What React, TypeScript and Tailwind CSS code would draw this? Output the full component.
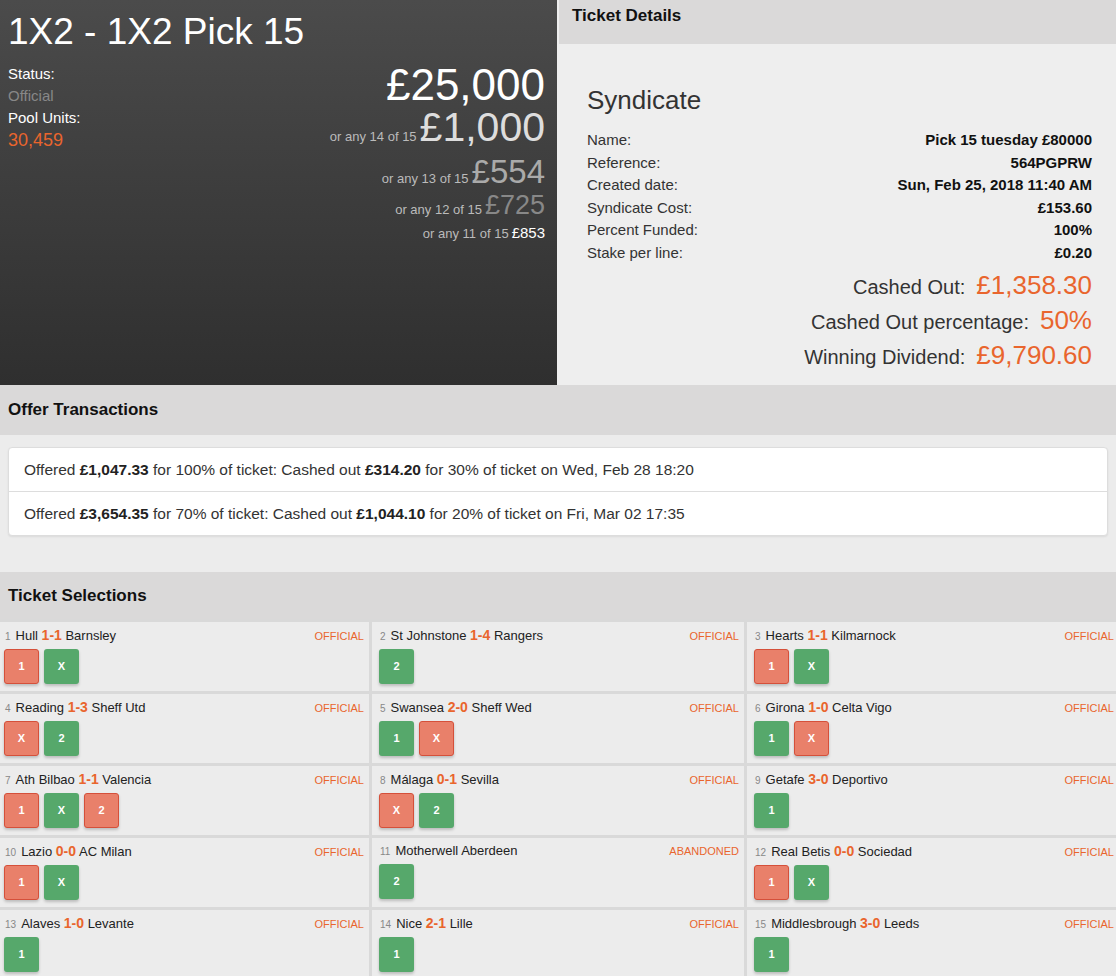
import React from "react";

type Pick = { label: string; win: boolean };
type Match = {
  n: number;
  home: string;
  away: string;
  score?: string;
  status: string;
  picks: Pick[];
};

const g = (label: string): Pick => ({ label, win: true });
const r = (label: string): Pick => ({ label, win: false });

const matches: Match[] = [
  { n: 1, home: "Hull", score: "1-1", away: "Barnsley", status: "OFFICIAL", picks: [r("1"), g("X")] },
  { n: 2, home: "St Johnstone", score: "1-4", away: "Rangers", status: "OFFICIAL", picks: [g("2")] },
  { n: 3, home: "Hearts", score: "1-1", away: "Kilmarnock", status: "OFFICIAL", picks: [r("1"), g("X")] },
  { n: 4, home: "Reading", score: "1-3", away: "Sheff Utd", status: "OFFICIAL", picks: [r("X"), g("2")] },
  { n: 5, home: "Swansea", score: "2-0", away: "Sheff Wed", status: "OFFICIAL", picks: [g("1"), r("X")] },
  { n: 6, home: "Girona", score: "1-0", away: "Celta Vigo", status: "OFFICIAL", picks: [g("1"), r("X")] },
  { n: 7, home: "Ath Bilbao", score: "1-1", away: "Valencia", status: "OFFICIAL", picks: [r("1"), g("X"), r("2")] },
  { n: 8, home: "Málaga", score: "0-1", away: "Sevilla", status: "OFFICIAL", picks: [r("X"), g("2")] },
  { n: 9, home: "Getafe", score: "3-0", away: "Deportivo", status: "OFFICIAL", picks: [g("1")] },
  { n: 10, home: "Lazio", score: "0-0", away: "AC Milan", status: "OFFICIAL", picks: [r("1"), g("X")] },
  { n: 11, home: "Motherwell", away: "Aberdeen", status: "ABANDONED", picks: [g("2")] },
  { n: 12, home: "Real Betis", score: "0-0", away: "Sociedad", status: "OFFICIAL", picks: [r("1"), g("X")] },
  { n: 13, home: "Alaves", score: "1-0", away: "Levante", status: "OFFICIAL", picks: [g("1")] },
  { n: 14, home: "Nice", score: "2-1", away: "Lille", status: "OFFICIAL", picks: [g("1")] },
  { n: 15, home: "Middlesbrough", score: "3-0", away: "Leeds", status: "OFFICIAL", picks: [g("1")] },
];

const details: [string, string][] = [
  ["Name:", "Pick 15 tuesday £80000"],
  ["Reference:", "564PGPRW"],
  ["Created date:", "Sun, Feb 25, 2018 11:40 AM"],
  ["Syndicate Cost:", "£153.60"],
  ["Percent Funded:", "100%"],
  ["Stake per line:", "£0.20"],
];

function SelectionCell({ m }: { m: Match }) {
  return (
    <div className="bg-[#ececec] h-[69px] pl-[7px] pr-[5px] pt-[4px]">
      <div className="flex items-baseline justify-between leading-[18px]">
        <div className="text-[13px] text-[#222]">
          <span className="text-[10px] text-[#888] ml-[1px] mr-[5px]">{m.n}</span>
          {m.home}{" "}
          {m.score && (
            <>
              <span className="text-[14px] font-bold text-[#e9652d]">{m.score}</span>{" "}
            </>
          )}
          {m.away}
        </div>
        <div className="text-[11px] text-[#e9652d]">{m.status}</div>
      </div>
      <div className="flex gap-[5px] mt-[3px]">
        {m.picks.map((p, i) => (
          <div
            key={i}
            className={
              p.win
                ? "w-[35px] h-[35px] rounded-[3px] bg-[#56a86b] text-white text-[11px] font-bold flex items-center justify-center shadow-[0_2px_3px_rgba(0,0,0,0.2)]"
                : "w-[35px] h-[35px] rounded-[3px] bg-[#e9806a] border border-[#d5503a] text-white text-[11px] font-bold flex items-center justify-center shadow-[0_2px_3px_rgba(0,0,0,0.2)]"
            }
          >
            {p.label}
          </div>
        ))}
      </div>
    </div>
  );
}

export default function App() {
  return (
    <div className="w-[1116px] h-[976px] overflow-hidden bg-[#ececec] font-['Liberation_Sans',Arial,sans-serif]">
      {/* top: pool summary + ticket details */}
      <div className="flex h-[385px]">
        <div className="w-[557px] bg-linear-to-b from-[#4b4b4b] to-[#2f2f2f] px-[8px] pr-[12px] pt-[12px]">
          <h1 className="text-[37px] leading-[40px] text-white">1X2 - 1X2 Pick 15</h1>
          <div className="flex justify-between mt-[11px]">
            <div className="text-[15px] leading-[22px]">
              <div className="text-white">Status:</div>
              <div className="text-[#888]">Official</div>
              <div className="text-white">Pool Units:</div>
              <div className="text-[18px] text-[#e9652d]">30,459</div>
            </div>
            <div className="flex flex-col items-end">
              <div className="text-[44px] leading-[44px] text-white">£25,000</div>
              <div className="flex items-baseline">
                <span className="text-[13px] leading-none text-[#bbb] mr-[3px]">or any 14 of 15</span>
                <span className="text-[41px] leading-[40px] text-[#dddddd]">£1,000</span>
              </div>
              <div className="flex items-baseline mt-[8px]">
                <span className="text-[13px] leading-none text-[#bbb] mr-[3px]">or any 13 of 15</span>
                <span className="text-[33px] leading-none text-[#aaaaaa]">£554</span>
              </div>
              <div className="flex items-baseline mt-[4px]">
                <span className="text-[13px] leading-none text-[#bbb] mr-[3px]">or any 12 of 15</span>
                <span className="text-[27px] leading-none text-[#888888]">£725</span>
              </div>
              <div className="flex items-baseline mt-[6px]">
                <span className="text-[13px] leading-none text-[#bbb] mr-[3px]">or any 11 of 15</span>
                <span className="text-[15px] leading-none text-white">£853</span>
              </div>
            </div>
          </div>
        </div>

        <div className="flex-1 bg-[#eeeeee]">
          <div className="ml-[2px] h-[44px] bg-[#dad9d9] pl-[13px] pt-[6px]">
            <h2 className="text-[17px] leading-[20px] font-bold text-[#111]">Ticket Details</h2>
          </div>
          <div className="pl-[30px] pr-[24px] pt-[43px]">
            <div className="text-[26px] leading-none text-[#333]">Syndicate</div>
            <div className="mt-[16px] text-[15px] leading-[22.6px]">
              {details.map(([k, v]) => (
                <div key={k} className="flex justify-between">
                  <span className="text-[#333]">{k}</span>
                  <span className="font-bold text-[#111]">{v}</span>
                </div>
              ))}
            </div>
            <div className="mt-[4px] leading-[33px]">
              <div className="flex justify-end items-baseline">
                <span className="text-[20px] text-[#333] mr-[11px]">Cashed Out:</span>
                <span className="text-[26px] text-[#e9652d]">£1,358.30</span>
              </div>
              <div className="flex justify-end items-baseline">
                <span className="text-[20px] text-[#333] mr-[11px]">Cashed Out percentage:</span>
                <span className="text-[26px] text-[#e9652d]">50%</span>
              </div>
              <div className="flex justify-end items-baseline">
                <span className="text-[20px] text-[#333] mr-[11px]">Winning Dividend:</span>
                <span className="text-[26px] text-[#e9652d]">£9,790.60</span>
              </div>
            </div>
          </div>
        </div>
      </div>

      {/* offer transactions */}
      <div className="h-[50px] bg-[#dad9d9] flex items-center pl-[8px]">
        <h2 className="text-[17px] font-bold text-[#111]">Offer Transactions</h2>
      </div>
      <div className="h-[137px] pt-[12px] px-[8px]">
        <div className="bg-white border border-[#dddddd] rounded-[4px] shadow-[0_1px_2px_rgba(0,0,0,0.08)] text-[15.5px] text-[#333]">
          <div className="h-[44px] flex items-center pl-[15px] border-b border-[#dddddd]">
            <span>
              Offered <b className="text-[#222]">£1,047.33</b> for 100% of ticket: Cashed out{" "}
              <b className="text-[#222]">£314.20</b> for 30% of ticket on Wed, Feb 28 18:20
            </span>
          </div>
          <div className="h-[43px] flex items-center pl-[15px]">
            <span>
              Offered <b className="text-[#222]">£3,654.35</b> for 70% of ticket: Cashed out{" "}
              <b className="text-[#222]">£1,044.10</b> for 20% of ticket on Fri, Mar 02 17:35
            </span>
          </div>
        </div>
      </div>

      {/* ticket selections */}
      <div className="h-[47px] bg-[#dad9d9] flex items-center pl-[8px]">
        <h2 className="text-[17px] font-bold text-[#111]">Ticket Selections</h2>
      </div>
      <div className="grid grid-cols-3 gap-[3px] pt-[3px] ml-[-3px] w-[1122px] bg-[#d9d9d9]">
        {matches.map((m) => (
          <SelectionCell key={m.n} m={m} />
        ))}
      </div>
    </div>
  );
}
